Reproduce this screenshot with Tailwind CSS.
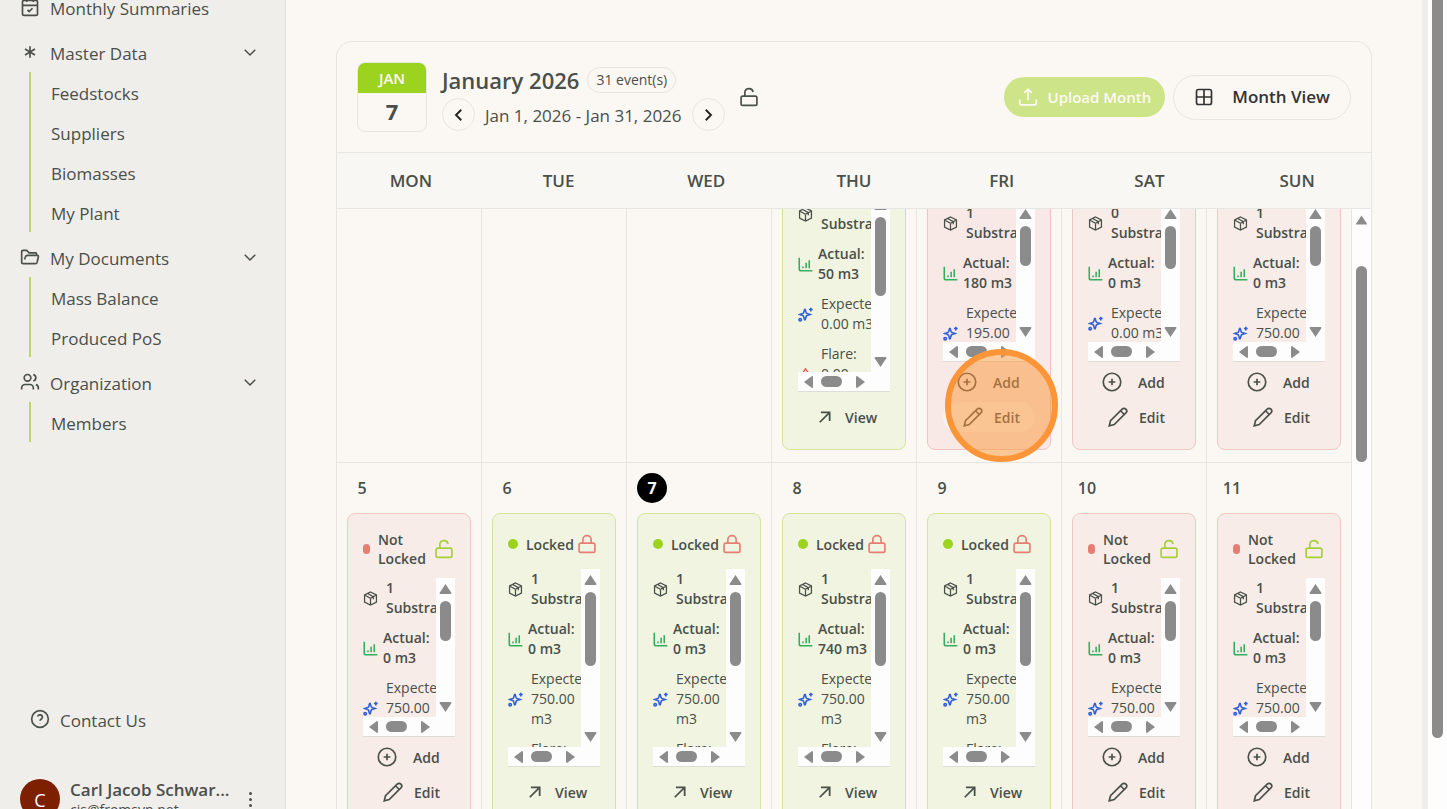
<!DOCTYPE html>
<html lang="en">
  <head>
    <meta charset="UTF-8" />
    <meta name="viewport" content="width=device-width, initial-scale=1.0" />
    <title>Calendar - January 2026</title>
    <script src="https://cdn.jsdelivr.net/npm/@tailwindcss/browser@4"></script>
  </head>
  <body class="flex h-screen overflow-hidden bg-[#f0eeea] font-['Open_Sans','Noto_Sans',sans-serif] text-[#4a4f4a]">
    <!-- icons -->
    <svg class="hidden">
      <symbol id="calendar-check" viewBox="0 0 24 24"><path d="M8 2v4M16 2v4M3 10h18M9 15.500l2 2 4-4" /><rect x="3" y="4" width="18" height="18" rx="2" /></symbol>
      <symbol id="asterisk" viewBox="0 0 24 24"><path d="M12 5v14M6 8.500l12 7M18 8.500l-12 7" /></symbol>
      <symbol id="folder" viewBox="0 0 24 24"><path d="M2 17V5.500A1.500 1.500 0 0 1 3.500 4H8l3 3h7.500A1.500 1.500 0 0 1 20 8.500V10M2 17v1.500A1.500 1.500 0 0 0 3.500 20h15a2 2 0 0 0 2-1.500L22 12a1.500 1.500 0 0 0-1.500-2H9a3 3 0 0 0-2.800 2.500L5.500 15" /></symbol>
      <symbol id="users" viewBox="0 0 24 24"><circle cx="9" cy="7" r="4" /><path d="M2 21v-2a4 4 0 0 1 4-4h6a4 4 0 0 1 4 4v2M22 21v-2a4 4 0 0 0-3-3.870M16 3.130a4 4 0 0 1 0 7.750" /></symbol>
      <symbol id="help" viewBox="0 0 24 24"><circle cx="12" cy="12" r="10" /><path d="M9.100 9a3 3 0 0 1 5.800 1c0 2-2.900 2.500-2.900 4M12 17v.5" /></symbol>
      <symbol id="chevron-down" viewBox="0 0 24 24"><path d="M5 9l7 7 7-7" /></symbol>
      <symbol id="chevron-left" viewBox="0 0 24 24"><path d="M15 5l-7 7 7 7" /></symbol>
      <symbol id="chevron-right" viewBox="0 0 24 24"><path d="M9 5l7 7-7 7" /></symbol>
      <symbol id="lock" viewBox="0 0 24 24"><rect x="2.500" y="11" width="19" height="11" rx="2" /><path d="M7 11V7a5 5 0 0 1 10 0v4" /></symbol>
      <symbol id="lock-open" viewBox="0 0 24 24"><rect x="2.500" y="11" width="19" height="11" rx="2" /><path d="M7 11V7a5 5 0 0 1 9.900-1" /></symbol>
      <symbol id="upload" viewBox="0 0 24 24"><path d="M12 16V2.500M7.500 7L12 2.500 16.500 7M2 15v4a2.500 2.500 0 0 0 2.500 2.500h15A2.500 2.500 0 0 0 22 19v-4" /></symbol>
      <symbol id="grid" viewBox="0 0 24 24"><rect x="3" y="3" width="18" height="18" rx="2.500" /><path d="M3 12h18M12 3v18" /></symbol>
      <symbol id="box" viewBox="0 0 24 24"><path d="M12 1.500l9.500 4.800v11.400l-9.500 4.800-9.500-4.800V6.300zM2.500 6.500l9.500 5 9.500-5M12 11.500v11M7.500 4l9 5v4" /></symbol>
      <symbol id="chart" viewBox="0 0 24 24"><path d="M2 1v18a3 3 0 0 0 3 3h18M8 18v-3M13 18V9M18 18V5" /></symbol>
      <symbol id="sparkles" viewBox="0 0 24 24"><path d="M10.500 20.500l-1.500-5.300a2 2 0 0 0-1.400-1.400L2.500 12l5.100-1.600A2 2 0 0 0 9 9l1.500-5h1L13 9a2 2 0 0 0 1.400 1.400L19.500 12l-5.100 1.800a2 2 0 0 0-1.400 1.400l-1.500 5.300zM20.500 1v6M17.500 4h6" /><circle cx="3.500" cy="20.500" r="2" /></symbol>
      <symbol id="flame" viewBox="0 0 24 24"><path d="M12 2c1 5 7 7 7 13a7 7 0 0 1-14 0c0-5 6-8 7-13zM9 17a3 3 0 0 0 6 0" /></symbol>
      <symbol id="plus-circle" viewBox="0 0 24 24"><circle cx="12" cy="12" r="10.500" /><path d="M8 12h8M12 8v8" /></symbol>
      <symbol id="pencil" viewBox="0 0 24 24"><path d="M17 2.500a3 3 0 0 1 4.500 4.500L7.500 21 1.500 22.500 3 16.500zM15 4.500l4.500 4.500" /></symbol>
      <symbol id="arrow" viewBox="0 0 24 24"><path d="M3 21L20 4M5 4h15v15" /></symbol>
    </svg>

    <aside class="flex h-screen w-[286px] shrink-0 flex-col overflow-hidden border-r border-[#e6e3df] px-5">
      <nav class="-mt-[13px] flex flex-col gap-[5px] text-[17px]">
        <a href="#" class="flex h-10 items-center gap-[10px]">
          <svg class="size-5 fill-none stroke-current stroke-2"><use href="#calendar-check" /></svg>
          <span class="pt-[3px]">Monthly Summaries</span>
        </a>
        <div>
          <button class="flex h-10 w-full items-center gap-[10px] pr-[6px]">
            <svg class="size-5 fill-none stroke-current stroke-2"><use href="#asterisk" /></svg>
            <span class="flex-1 pt-[3px] text-left">Master Data</span>
            <svg class="size-[18px] fill-none stroke-current stroke-2"><use href="#chevron-down" /></svg>
          </button>
          <div class="ml-[9px] flex flex-col border-l-2 border-[#bcd66c] pl-5">
            <a href="#" class="h-10 leading-[43px]">Feedstocks</a>
            <a href="#" class="h-10 leading-[43px]">Suppliers</a>
            <a href="#" class="h-10 leading-[43px]">Biomasses</a>
            <a href="#" class="h-10 leading-[43px]">My Plant</a>
          </div>
        </div>
        <div>
          <button class="flex h-10 w-full items-center gap-[10px] pr-[6px]">
            <svg class="size-5 fill-none stroke-current stroke-2"><use href="#folder" /></svg>
            <span class="flex-1 pt-[3px] text-left">My Documents</span>
            <svg class="size-[18px] fill-none stroke-current stroke-2"><use href="#chevron-down" /></svg>
          </button>
          <div class="ml-[9px] flex flex-col border-l-2 border-[#bcd66c] pl-5">
            <a href="#" class="h-10 leading-[43px]">Mass Balance</a>
            <a href="#" class="h-10 leading-[43px]">Produced PoS</a>
          </div>
        </div>
        <div>
          <button class="flex h-10 w-full items-center gap-[10px] pr-[6px]">
            <svg class="size-5 fill-none stroke-current stroke-2"><use href="#users" /></svg>
            <span class="flex-1 pt-[3px] text-left">Organization</span>
            <svg class="size-[18px] fill-none stroke-current stroke-2"><use href="#chevron-down" /></svg>
          </button>
          <div class="ml-[9px] flex flex-col border-l-2 border-[#bcd66c] pl-5">
            <a href="#" class="h-10 leading-[43px]">Members</a>
          </div>
        </div>
      </nav>

      <a href="#" class="mt-auto flex h-10 shrink-0 items-center gap-[10px] pl-[10px] text-[17px]">
        <svg class="size-5 fill-none stroke-current stroke-2"><use href="#help" /></svg>
        <span class="pt-[3px]">Contact Us</span>
      </a>
      <div class="mt-10 flex h-[30px] shrink-0 items-start gap-[10px]">
        <div class="flex size-10 shrink-0 items-center justify-center rounded-full bg-[#7c2000] pt-[2px] text-lg text-white">C</div>
        <div class="flex-1 pt-px whitespace-nowrap">
          <p class="text-[17px] leading-5 font-semibold">Carl Jacob Schwar...</p>
          <p class="text-sm leading-5">cjs@fromsyn.net</p>
        </div>
        <button class="mr-[5px] flex h-10 w-5 shrink-0 flex-col items-center justify-center gap-[3px]" aria-label="Account menu">
          <span class="size-[3px] rounded-full bg-[#4a4f4a]"></span>
          <span class="size-[3px] rounded-full bg-[#4a4f4a]"></span>
          <span class="size-[3px] rounded-full bg-[#4a4f4a]"></span>
        </button>
      </div>
    </aside>

    <main class="h-screen min-w-0 flex-1 overflow-hidden bg-[#fbf8f3] px-[50px] pt-[41px]">
      <section class="flex h-full flex-col rounded-t-2xl border border-b-0 border-[#e8e6e2]">
        <header class="flex h-[111px] shrink-0 items-center border-b border-[#e8e6e2] px-5">
          <div class="h-[70px] w-[70px] overflow-hidden rounded-lg border border-[#e8e6e2] text-center">
            <p class="h-[30px] bg-[#9bd31f] text-[15px] leading-[30px] font-semibold text-[#fcf9f4]">JAN</p>
            <p class="text-[22px] leading-9 font-bold">7</p>
          </div>
          <div class="ml-[15px] h-[70px]">
            <div class="flex h-9 items-center gap-2">
              <h1 class="text-[22px] font-semibold">January 2026</h1>
              <span class="flex h-[26px] items-center rounded-full border border-[#e8e6e2] px-2 text-sm font-medium">31 event(s)</span>
            </div>
            <div class="flex items-center gap-[10px]">
              <button class="flex size-[33px] items-center justify-center rounded-full border border-[#e8e6e2] text-[#222]" aria-label="Previous month">
                <svg class="size-[18px] fill-none stroke-current stroke-[2.5]"><use href="#chevron-left" /></svg>
              </button>
              <p class="pt-[2px] text-[17px]">Jan 1, 2026 - Jan 31, 2026</p>
              <button class="flex size-[33px] items-center justify-center rounded-full border border-[#e8e6e2] text-[#222]" aria-label="Next month">
                <svg class="size-[18px] fill-none stroke-current stroke-[2.5]"><use href="#chevron-right" /></svg>
              </button>
            </div>
          </div>
          <svg class="ml-[14px] size-5 fill-none stroke-current stroke-2"><use href="#lock-open" /></svg>
          <button class="ml-auto flex h-10 items-center gap-[10px] rounded-full bg-[#cde588] px-[14px] text-[15px] font-semibold text-[#fcf9f4]">
            <svg class="size-5 fill-none stroke-current stroke-2"><use href="#upload" /></svg>
            Upload Month
          </button>
          <button class="ml-2 flex h-[45px] items-center gap-[18px] rounded-full border border-[#e8e6e2] px-5 text-[17px] font-semibold text-[#333]">
            <svg class="size-5 fill-none stroke-current stroke-2"><use href="#grid" /></svg>
            Month View
          </button>
        </header>

        <div class="grid h-14 shrink-0 grid-cols-7 items-center border-b border-[#e8e6e2] bg-[#f8f7f3] text-center text-[17px] font-semibold">
          <span>MON</span>
          <span>TUE</span>
          <span>WED</span>
          <span>THU</span>
          <span>FRI</span>
          <span>SAT</span>
          <span>SUN</span>
        </div>

        <div class="flex min-h-0 flex-1">
          <div class="min-w-0 flex-1 overflow-hidden">
            <div id="days" class="-mt-[121px] grid grid-cols-7"></div>
          </div>
          <div class="flex w-[19px] shrink-0 flex-col items-center bg-[#fdfdfd] pt-[6px]">
            <svg class="h-[10px] w-[11px] fill-[#8b8b8b]" viewBox="0 0 12 10"><path d="M6 0l6 9q0 1-1 1H1q-1 0-1-1z" /></svg>
            <div class="mt-[41px] h-[196px] w-[11px] rounded-full bg-[#8b8b8b]"></div>
          </div>
        </div>
      </section>
    </main>

    <div class="w-[6px] shrink-0"></div>
    <div class="flex w-[19px] shrink-0 justify-center bg-[#fdfdfd]">
      <div class="h-[738px] w-[11px] rounded-b-full bg-[#8b8b8b]"></div>
    </div>

    <!-- click marker -->
    <div class="pointer-events-none absolute top-[349px] left-[945px] z-10 size-[113px] rounded-full border-6 border-[#fb9537] bg-[#fb9537]/50"></div>

    <script>
      const days = [
        {},
        {},
        {},
        { day: 1, locked: true, substrates: 0, actual: "50 m3", expected: "0.00 m3", thumb: 79 },
        { day: 2, substrates: 1, actual: "180 m3", expected: "195.00<br />m3", thumb: 40, active: true },
        { day: 3, substrates: 0, actual: "0 m3", expected: "0.00 m3", thumb: 43 },
        { day: 4, substrates: 1, actual: "0 m3", expected: "750.00<br />m3", thumb: 40 },
        { day: 5, substrates: 1, actual: "0 m3", expected: "750.00<br />m3", thumb: 40 },
        { day: 6, locked: true, substrates: 1, actual: "0 m3", expected: "750.00<br />m3", thumb: 74 },
        { day: 7, locked: true, substrates: 1, actual: "0 m3", expected: "750.00<br />m3", thumb: 74, today: true },
        { day: 8, locked: true, substrates: 1, actual: "740 m3", expected: "750.00<br />m3", thumb: 74 },
        { day: 9, locked: true, substrates: 1, actual: "0 m3", expected: "750.00<br />m3", thumb: 74 },
        { day: 10, substrates: 1, actual: "0 m3", expected: "750.00<br />m3", thumb: 40 },
        { day: 11, substrates: 1, actual: "0 m3", expected: "750.00<br />m3", thumb: 40 },
      ];

      const statusRow = (d) =>
        d.locked
          ? `<div class="flex h-[30px] shrink-0 items-center">
              <span class="size-[10px] shrink-0 rounded-full bg-[#9bd31f]"></span>
              <span class="ml-2 w-[51px] pt-px text-sm font-semibold">Locked</span>
              <svg class="size-5 shrink-0 fill-none stroke-[#e57f76] stroke-2"><use href="#lock" /></svg>
            </div>`
          : `<div class="flex h-[39px] shrink-0 items-center pr-px">
              <span class="h-[10px] w-[7px] shrink-0 rounded-full bg-[#e57f76]"></span>
              <span class="ml-2 flex-1 text-sm leading-[19px] font-semibold">Not<br />Locked</span>
              <svg class="size-5 shrink-0 fill-none stroke-[#a6cf3a] stroke-2"><use href="#lock-open" /></svg>
            </div>`;

      const details = (d) => `
        <div class="flex min-h-0 flex-1 flex-col border-b border-[#dddcd6]">
          <div class="flex min-h-0 flex-1">
            <div class="flex min-w-0 flex-1 flex-col gap-[10px] overflow-hidden text-sm leading-5 whitespace-nowrap">
              <div class="flex items-center gap-2 font-semibold">
                <svg class="size-[15px] shrink-0 fill-none stroke-current stroke-2"><use href="#box" /></svg>
                <span>${d.substrates}<br />Substrates</span>
              </div>
              <div class="flex items-center gap-[5px] font-semibold">
                <svg class="size-[15px] shrink-0 fill-none stroke-[#35ad5f] stroke-[2.5]"><use href="#chart" /></svg>
                <span>Actual:<br />${d.actual}</span>
              </div>
              <div class="flex items-center gap-2">
                <svg class="size-[15px] shrink-0 fill-none stroke-[#2f5fd8] stroke-[2.5]"><use href="#sparkles" /></svg>
                <span>Expected:<br />${d.expected}</span>
              </div>
              <div class="flex items-center gap-2">
                <svg class="size-[15px] shrink-0 fill-none stroke-[#dc4c46] stroke-2"><use href="#flame" /></svg>
                <span>Flare:<br />0.00<br />m3</span>
              </div>
            </div>
            <div class="flex w-[19px] shrink-0 flex-col items-center bg-[#fdfdfd] pt-[6px] pb-[5px]">
              <svg class="h-[10px] w-[13px] shrink-0 fill-[#8b8b8b]" viewBox="0 0 12 10"><path d="M6 0l6 9q0 1-1 1H1q-1 0-1-1z" /></svg>
              <div class="mt-[7px] w-[11px] shrink-0 rounded-full bg-[#8b8b8b]" style="height: ${d.thumb}px"></div>
              <svg class="mt-auto h-[10px] w-[13px] shrink-0 fill-[#8b8b8b]" viewBox="0 0 12 10"><path d="M6 10L0 1q0-1 1-1h10q1 0 1 1z" /></svg>
            </div>
          </div>
          <div class="flex h-[19px] shrink-0 items-center bg-[#fdfdfd] pl-[6px]">
            <svg class="h-3 w-[9px] fill-[#8b8b8b]" viewBox="0 0 9 12"><path d="M0 6l8-6q1 0 1 1v10q0 1-1 1z" /></svg>
            <div class="ml-2 h-[11px] w-[21px] rounded-full bg-[#8b8b8b]"></div>
            <svg class="ml-[14px] h-3 w-[9px] fill-[#8b8b8b]" viewBox="0 0 9 12"><path d="M9 6L1 0Q0 0 0 1v10q0 1 1 1z" /></svg>
          </div>
        </div>`;

      const actions = (d) =>
        d.locked
          ? `<button class="mt-[10px] flex h-[30px] items-center pl-5 text-sm font-semibold">
              <svg class="size-[14px] fill-none stroke-current stroke-3"><use href="#arrow" /></svg>
              <span class="ml-[13px] pt-px">View</span>
            </button>`
          : `<button class="mt-[5px] flex h-[30px] items-center pl-[14px] text-sm font-semibold">
              <svg class="size-5 fill-none stroke-current stroke-2"><use href="#plus-circle" /></svg>
              <span class="ml-4 pt-px">Add</span>
            </button>
            <button class="mt-[5px] flex h-[30px] items-center rounded-full pl-5 text-sm font-semibold ${d.active ? "bg-[#fcf9f4]/60" : ""}">
              <svg class="size-5 fill-none stroke-current stroke-2"><use href="#pencil" /></svg>
              <span class="ml-[11px] pt-px">Edit</span>
            </button>`;

      const cardColor = (d) => {
        if (d.locked) return "border-[#d3e59c] bg-[#f0f4e0]";
        return d.active ? "border-[#efc4c0] bg-[#f8e9e6]" : "border-[#efc8c2] bg-[#f7ece7]";
      };

      document.getElementById("days").innerHTML = days
        .map((d) =>
          d.day
            ? `<div class="flex h-[375px] flex-col border-r border-b border-[#e8e6e2] px-[10px] pt-[10px] pb-3">
                <div class="mb-[10px] flex size-[30px] shrink-0 items-center justify-center rounded-full text-base ${d.today ? "bg-black font-bold text-white" : "font-semibold"}">${d.day}</div>
                <article class="flex min-h-0 flex-1 flex-col rounded-lg border px-[15px] pt-[15px] pb-[17px] ${cardColor(d)}">
                  ${statusRow(d)}
                  <div class="h-[10px] shrink-0"></div>
                  ${details(d)}
                  ${actions(d)}
                </article>
              </div>`
            : `<div class="h-[375px] border-r border-b border-[#e8e6e2]"></div>`
        )
        .join("");
    </script>
  </body>
</html>
